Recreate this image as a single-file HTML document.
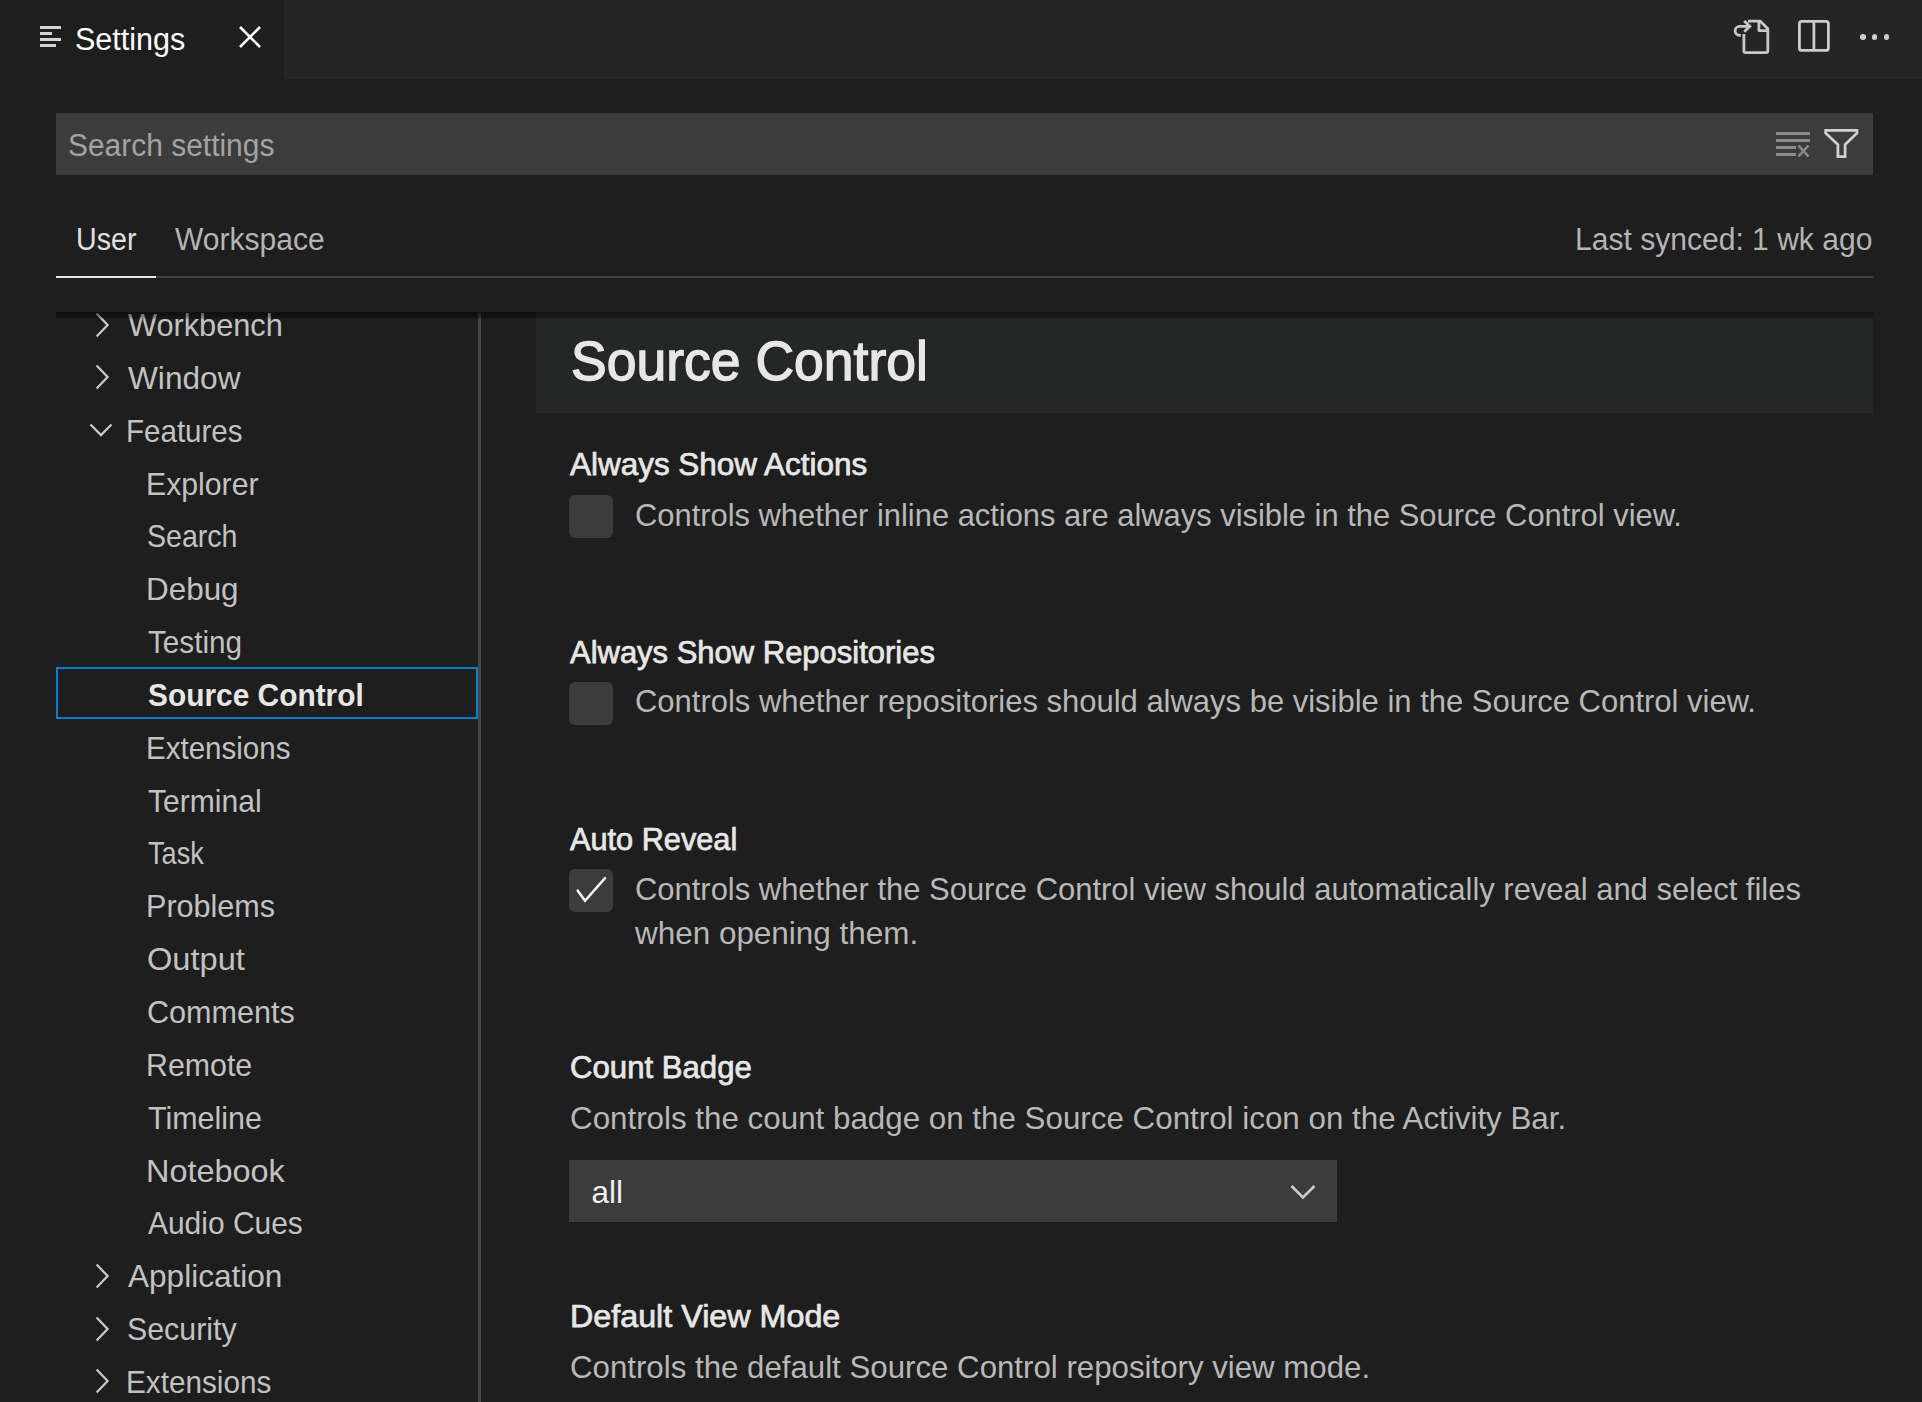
<!DOCTYPE html>
<html><head><meta charset="utf-8"><style>
html,body{margin:0;padding:0;width:1922px;height:1402px;overflow:hidden;background:#1e1e1e;}
body{position:relative;font-family:"Liberation Sans",sans-serif;}
.t{position:absolute;white-space:nowrap;line-height:100px;height:100px;transform-origin:0 0;}
</style></head><body>
<div style="position:absolute;left:0;top:0;width:1922px;height:79px;background:#252526"></div>
<div style="position:absolute;left:0;top:0;width:284px;height:79px;background:#1e1e1e"></div>
<div style="position:absolute;left:40px;top:26px;width:21px;height:3px;background:#d4d4d4"></div>
<div style="position:absolute;left:40px;top:32px;width:12px;height:3px;background:#d4d4d4"></div>
<div style="position:absolute;left:40px;top:38px;width:21px;height:3px;background:#d4d4d4"></div>
<div style="position:absolute;left:40px;top:44px;width:16px;height:3px;background:#d4d4d4"></div>
<div class="t" style="left:74.80px;top:-9.94px;font-size:31px;font-weight:400;color:#ffffff;transform:scaleX(0.9839);">Settings</div>
<svg style="position:absolute;left:236px;top:23px" width="28" height="28" viewBox="0 0 28 28"><path d="M4 4L24 24M24 4L4 24" stroke="#ffffff" stroke-width="2.6" fill="none"/></svg>
<svg style="position:absolute;left:1720px;top:10px" width="180" height="60" viewBox="1720 10 180 60">
<g fill="none" stroke="#c8c8c8" stroke-width="2.8" stroke-linejoin="round">
<path d="M1748 21.2 L1760.3 21.2 L1767.8 28.7 L1767.8 50.8 Q1767.8 52.6 1766 52.6 L1745.7 52.6 Q1743.9 52.6 1743.9 50.8 L1743.9 34"/>
<path d="M1758.9 21.2 L1758.9 30.6 L1767.8 30.6"/>
<path d="M1749 26.3 L1739.6 26.3 A4.5 4.5 0 0 0 1739.6 35.3 L1740.8 35.3"/>
<path d="M1744.2 20.9 L1749.8 26.3 L1744.2 31.7" stroke-linejoin="miter"/>
</g></svg>
<svg style="position:absolute;left:1792px;top:14px" width="44" height="44" viewBox="0 0 44 44">
<g fill="none" stroke="#cccccc" stroke-width="2.8">
<rect x="7.4" y="7.4" width="29" height="29" rx="2.5"/>
<path d="M21.9 7.4 L21.9 36.4"/>
</g></svg>
<div style="position:absolute;left:1860.0px;top:34.4px;width:5.6px;height:5.6px;border-radius:50%;background:#cccccc"></div>
<div style="position:absolute;left:1871.9px;top:34.4px;width:5.6px;height:5.6px;border-radius:50%;background:#cccccc"></div>
<div style="position:absolute;left:1883.9px;top:34.4px;width:5.6px;height:5.6px;border-radius:50%;background:#cccccc"></div>
<div style="position:absolute;left:56px;top:113px;width:1817px;height:62px;background:#3c3c3c"></div>
<div class="t" style="left:68.40px;top:96.06px;font-size:31px;font-weight:400;color:#a3a3a3;transform:scaleX(0.9659);">Search settings</div>
<div style="position:absolute;left:1776px;top:131.8px;width:34px;height:3px;background:#8b8b8b"></div>
<div style="position:absolute;left:1776px;top:138.8px;width:34px;height:3px;background:#8b8b8b"></div>
<div style="position:absolute;left:1776px;top:145.9px;width:20px;height:3px;background:#8b8b8b"></div>
<div style="position:absolute;left:1776px;top:152.9px;width:20px;height:3px;background:#8b8b8b"></div>
<svg style="position:absolute;left:1796px;top:144px" width="15" height="14" viewBox="0 0 15 14"><path d="M2.5 1.5L12.5 12.5M12.5 1.5L2.5 12.5" stroke="#8b8b8b" stroke-width="2.6" fill="none"/></svg>
<svg style="position:absolute;left:1800px;top:110px" width="80" height="60" viewBox="1800 110 80 60">
<path d="M1825.7 130.4 L1856.9 130.4 L1856.9 133.2 L1845.1 144.6 L1845.1 156.6 L1837.9 156.6 L1837.9 144.6 L1825.7 133.2 Z" fill="none" stroke="#d0d0d0" stroke-width="2.8" stroke-linejoin="miter"/>
</svg>
<div class="t" style="left:76.40px;top:190.26px;font-size:31px;font-weight:400;color:#e0e0e0;transform:scaleX(0.9230);">User</div>
<div class="t" style="left:175.20px;top:190.26px;font-size:31px;font-weight:400;color:#b4b4b4;transform:scaleX(0.9691);">Workspace</div>
<div class="t" style="left:1574.80px;top:190.26px;font-size:31px;font-weight:400;color:#b4b4b4;transform:scaleX(0.9695);">Last synced: 1 wk ago</div>
<div style="position:absolute;left:56px;top:276px;width:1817px;height:2px;background:#404040"></div>
<div style="position:absolute;left:56px;top:276px;width:100px;height:2px;background:#e7e7e7"></div>
<div id="tree" style="position:absolute;left:56px;top:313px;width:424px;height:1089px;overflow:hidden">
<div class="t" style="left:72.00px;top:-37.91px;font-size:31.5px;font-weight:400;color:#c2c2c2;transform:scaleX(0.9751);">Workbench</div>
<svg style="position:absolute;left:36.5px;top:-2.5px" width="20" height="28" viewBox="0 0 20 28"><path d="M3.6 2.5 L14.6 14 L3.6 25.5" fill="none" stroke="#c8c8c8" stroke-width="2.3"/></svg>
<div class="t" style="left:72.00px;top:14.93px;font-size:31.5px;font-weight:400;color:#c2c2c2;transform:scaleX(1.0044);">Window</div>
<svg style="position:absolute;left:36.5px;top:50.3px" width="20" height="28" viewBox="0 0 20 28"><path d="M3.6 2.5 L14.6 14 L3.6 25.5" fill="none" stroke="#c8c8c8" stroke-width="2.3"/></svg>
<div class="t" style="left:70.00px;top:67.77px;font-size:31.5px;font-weight:400;color:#c2c2c2;transform:scaleX(0.9373);">Features</div>
<svg style="position:absolute;left:31.0px;top:107.2px" width="28" height="20" viewBox="0 0 28 20"><path d="M3.5 4.5 L14 15 L24.5 4.5" fill="none" stroke="#c8c8c8" stroke-width="2.3"/></svg>
<div class="t" style="left:89.90px;top:120.61px;font-size:31.5px;font-weight:400;color:#c2c2c2;transform:scaleX(0.9590);">Explorer</div>
<div class="t" style="left:90.90px;top:173.45px;font-size:31.5px;font-weight:400;color:#c2c2c2;transform:scaleX(0.9059);">Search</div>
<div class="t" style="left:89.90px;top:226.29px;font-size:31.5px;font-weight:400;color:#c2c2c2;transform:scaleX(0.9975);">Debug</div>
<div class="t" style="left:91.90px;top:279.13px;font-size:31.5px;font-weight:400;color:#c2c2c2;transform:scaleX(0.9430);">Testing</div>
<div class="t" style="left:91.90px;top:331.97px;font-size:31.5px;font-weight:700;color:#e7e7e7;transform:scaleX(0.9485);">Source Control</div>
<div style="position:absolute;left:0px;top:354.2px;width:422px;height:52px;box-sizing:border-box;border:2px solid #007fd4"></div>
<div class="t" style="left:89.90px;top:384.81px;font-size:31.5px;font-weight:400;color:#c2c2c2;transform:scaleX(0.9377);">Extensions</div>
<div class="t" style="left:91.90px;top:437.65px;font-size:31.5px;font-weight:400;color:#c2c2c2;transform:scaleX(0.9543);">Terminal</div>
<div class="t" style="left:91.90px;top:490.49px;font-size:31.5px;font-weight:400;color:#c2c2c2;transform:scaleX(0.8608);">Task</div>
<div class="t" style="left:89.90px;top:543.33px;font-size:31.5px;font-weight:400;color:#c2c2c2;transform:scaleX(0.9703);">Problems</div>
<div class="t" style="left:90.90px;top:596.17px;font-size:31.5px;font-weight:400;color:#c2c2c2;transform:scaleX(1.0342);">Output</div>
<div class="t" style="left:90.90px;top:649.01px;font-size:31.5px;font-weight:400;color:#c2c2c2;transform:scaleX(0.9711);">Comments</div>
<div class="t" style="left:89.90px;top:701.85px;font-size:31.5px;font-weight:400;color:#c2c2c2;transform:scaleX(0.9630);">Remote</div>
<div class="t" style="left:91.90px;top:754.69px;font-size:31.5px;font-weight:400;color:#c2c2c2;transform:scaleX(0.9671);">Timeline</div>
<div class="t" style="left:89.90px;top:807.53px;font-size:31.5px;font-weight:400;color:#c2c2c2;transform:scaleX(1.0288);">Notebook</div>
<div class="t" style="left:91.90px;top:860.37px;font-size:31.5px;font-weight:400;color:#c2c2c2;transform:scaleX(0.9505);">Audio Cues</div>
<div class="t" style="left:72.00px;top:913.21px;font-size:31.5px;font-weight:400;color:#c2c2c2;transform:scaleX(1.0020);">Application</div>
<svg style="position:absolute;left:36.5px;top:948.6px" width="20" height="28" viewBox="0 0 20 28"><path d="M3.6 2.5 L14.6 14 L3.6 25.5" fill="none" stroke="#c8c8c8" stroke-width="2.3"/></svg>
<div class="t" style="left:71.00px;top:966.05px;font-size:31.5px;font-weight:400;color:#c2c2c2;transform:scaleX(0.9633);">Security</div>
<svg style="position:absolute;left:36.5px;top:1001.5px" width="20" height="28" viewBox="0 0 20 28"><path d="M3.6 2.5 L14.6 14 L3.6 25.5" fill="none" stroke="#c8c8c8" stroke-width="2.3"/></svg>
<div class="t" style="left:70.00px;top:1018.89px;font-size:31.5px;font-weight:400;color:#c2c2c2;transform:scaleX(0.9436);">Extensions</div>
<svg style="position:absolute;left:36.5px;top:1054.3px" width="20" height="28" viewBox="0 0 20 28"><path d="M3.6 2.5 L14.6 14 L3.6 25.5" fill="none" stroke="#c8c8c8" stroke-width="2.3"/></svg>
</div>
<div style="position:absolute;left:478px;top:313px;width:3px;height:1089px;background:#444444"></div>
<div style="position:absolute;left:536px;top:313px;width:1337px;height:100px;background:#252727"></div>
<div class="t" style="left:570.60px;top:310.64px;font-size:55px;font-weight:400;color:#e7e7e7;transform:scaleX(0.9729);-webkit-text-stroke:1.4px #e7e7e7;">Source Control</div>
<div class="t" style="left:570.00px;top:414.09px;font-size:31.5px;font-weight:400;color:#e7e7e7;transform:scaleX(0.9985);-webkit-text-stroke:0.75px #e7e7e7;">Always Show Actions</div>
<div style="position:absolute;left:569px;top:495.0px;width:44px;height:43px;border-radius:6px;background:#3c3c3c"></div>
<div class="t" style="left:634.60px;top:465.39px;font-size:31.5px;font-weight:400;color:#b8b8b8;transform:scaleX(0.9802);">Controls whether inline actions are always visible in the Source Control view.</div>
<div class="t" style="left:570.00px;top:601.99px;font-size:31.5px;font-weight:400;color:#e7e7e7;transform:scaleX(0.9831);-webkit-text-stroke:0.75px #e7e7e7;">Always Show Repositories</div>
<div style="position:absolute;left:569px;top:682.0px;width:44px;height:43px;border-radius:6px;background:#3c3c3c"></div>
<div class="t" style="left:634.60px;top:651.49px;font-size:31.5px;font-weight:400;color:#b8b8b8;transform:scaleX(0.9834);">Controls whether repositories should always be visible in the Source Control view.</div>
<div class="t" style="left:570.00px;top:789.09px;font-size:31.5px;font-weight:400;color:#e7e7e7;transform:scaleX(0.9743);-webkit-text-stroke:0.75px #e7e7e7;">Auto Reveal</div>
<div style="position:absolute;left:569px;top:869.0px;width:44px;height:43px;border-radius:6px;background:#3c3c3c"></div><svg style="position:absolute;left:569px;top:869.0px" width="44" height="43" viewBox="0 0 44 43"><path d="M8.6 21.6 L16 31.8 L36 9.2" fill="none" stroke="#f4f4f4" stroke-width="2.5" stroke-linecap="round"/></svg>
<div class="t" style="left:634.60px;top:839.39px;font-size:31.5px;font-weight:400;color:#b8b8b8;transform:scaleX(0.9821);">Controls whether the Source Control view should automatically reveal and select files</div>
<div class="t" style="left:635.36px;top:883.09px;font-size:31.5px;font-weight:400;color:#b8b8b8;transform:scaleX(0.9981);">when opening them.</div>
<div class="t" style="left:570.00px;top:1017.29px;font-size:31.5px;font-weight:400;color:#e7e7e7;transform:scaleX(0.9886);-webkit-text-stroke:0.75px #e7e7e7;">Count Badge</div>
<div class="t" style="left:570.00px;top:1068.09px;font-size:31.5px;font-weight:400;color:#b8b8b8;transform:scaleX(0.9946);">Controls the count badge on the Source Control icon on the Activity Bar.</div>
<div style="position:absolute;left:569px;top:1160px;width:768px;height:62px;background:#3c3c3c"></div>
<div class="t" style="left:591.50px;top:1141.69px;font-size:31.5px;font-weight:400;color:#f0f0f0;transform:scaleX(1.0000);">all</div>
<svg style="position:absolute;left:1287px;top:1178px" width="32" height="26" viewBox="0 0 32 26"><path d="M4.5 8 L15.9 19.5 L27.5 8" fill="none" stroke="#cccccc" stroke-width="2.6"/></svg>
<div class="t" style="left:570.00px;top:1266.09px;font-size:31.5px;font-weight:400;color:#e7e7e7;transform:scaleX(1.0246);-webkit-text-stroke:0.75px #e7e7e7;">Default View Mode</div>
<div class="t" style="left:570.00px;top:1316.59px;font-size:31.5px;font-weight:400;color:#b8b8b8;transform:scaleX(0.9913);">Controls the default Source Control repository view mode.</div>
<div style="position:absolute;left:56px;top:312px;width:1817px;height:7px;background:linear-gradient(rgba(0,0,0,0.5),rgba(0,0,0,0.35) 70%,rgba(0,0,0,0.1))"></div>
</body></html>
